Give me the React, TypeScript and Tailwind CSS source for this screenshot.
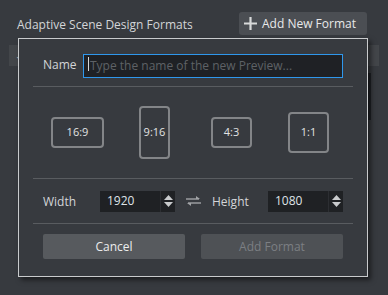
import { useState } from "react";

type Ratio = { label: string; w: string; h: string };

const ratios: Ratio[] = [
  { label: "16:9", w: "w-[53px]", h: "h-[31px]" },
  { label: "9:16", w: "w-[31px]", h: "h-[53px]" },
  { label: "4:3", w: "w-[41px]", h: "h-[31px]" },
  { label: "1:1", w: "w-[41px]", h: "h-[41px]" },
];

function Spinner() {
  return (
    <div className="flex h-full w-[15px] flex-col items-center justify-center gap-[2px] border-l border-[#2c2e32]">
      <svg width="9" height="5" viewBox="0 0 9 5">
        <path d="M4.5 0 L9 5 L0 5 Z" fill="#c9cbcd" />
      </svg>
      <svg width="9" height="5" viewBox="0 0 9 5">
        <path d="M0 0 L9 0 L4.5 5 Z" fill="#c9cbcd" />
      </svg>
    </div>
  );
}

function NumberBox({ value }: { value: string }) {
  return (
    <div className="flex h-[21px] w-[75px] items-center bg-[#1f2124]">
      <span className="flex-1 pl-[7px] text-[12px] leading-none text-[#dfe3e8]">{value}</span>
      <Spinner />
    </div>
  );
}

export default function App() {
  const [name, setName] = useState("");

  return (
    <div className="relative h-[295px] w-[388px] overflow-hidden bg-[#373a3f] font-['Open_Sans',sans-serif]">
      {/* page header */}
      <div className="flex items-center justify-between pl-[17px] pr-[21px] pt-[12px]">
        <h1 className="pt-[2px] text-[12px] text-[#d3d5d8]">Adaptive Scene Design Formats</h1>
        <button
          type="button"
          className="flex h-[23px] w-[128px] items-center gap-[5px] rounded-[3px] bg-[#4b4e53] pl-[5px] text-[12px] text-[#e8e9ea]"
        >
          <svg width="13" height="13" viewBox="0 0 13 13">
            <path d="M6.5 0 V13 M0 6.5 H13" stroke="#d8d9da" strokeWidth="2.2" />
          </svg>
          Add New Format
        </button>
      </div>

      {/* list behind the dialog */}
      <div className="mx-[9px] mt-[10px] flex h-[21px] items-center bg-[#43464a] pl-[6px]">
        <span className="text-[9px] text-[#b9bbbd]">⌄</span>
      </div>
      <div className="ml-[368px] mt-[7px] h-[47px] w-[3px] bg-[#202226]" />

      {/* dialog */}
      <div className="absolute left-[18px] top-[38px] flex w-[350px] flex-col border border-[#c9cbcd] bg-[#373a3f] shadow-[3px_3px_5px_rgba(0,0,0,0.5)]">
        <div className="flex items-center px-[24px] pt-[13px] pb-[10px]">
          <label className="w-[40px] pt-[2px] text-[12px] text-[#d3d5d8]">Name</label>
          <div className="relative h-[24px] flex-1">
            <input
              value={name}
              onChange={(e) => setName(e.target.value)}
              placeholder="Type the name of the new Preview..."
              className="h-full w-full border border-[#2f97ec] bg-[#1f2125] pl-[6px] text-[12px] text-[#dcdcdc] outline-none placeholder:text-[#5e6166]"
            />
            {name === "" && <span className="absolute left-[5px] top-[5px] h-[14px] w-px bg-[#d8d8d8]" />}
          </div>
        </div>

        <div className="mx-[14px] h-px bg-[#595c60]" />

        <div className="grid h-[91px] grid-cols-4 items-center px-[20px]">
          {ratios.map((r) => (
            <div key={r.label} className="flex justify-center">
              <button
                type="button"
                className={`${r.w} ${r.h} flex items-center justify-center rounded-[4px] border-2 border-[#838588] text-[11px] text-[#e2e3e4]`}
              >
                {r.label}
              </button>
            </div>
          ))}
        </div>

        <div className="mx-[14px] h-px bg-[#595c60]" />

        <div className="flex h-[44px] items-center px-[24px]">
          <span className="w-[57px] pt-[1px] text-[12px] text-[#d3d5d8]">Width</span>
          <NumberBox value="1920" />
          <div className="flex w-[37px] justify-center">
            <svg width="15" height="10" viewBox="0 0 15 10">
              <path d="M0 3 H13" stroke="#a2a4a7" strokeWidth="1.4" />
              <path d="M10 0 L14 3 L10 3 Z" fill="#a2a4a7" />
              <path d="M2 7 H15" stroke="#a2a4a7" strokeWidth="1.4" />
              <path d="M5 10 L1 7 L5 7 Z" fill="#a2a4a7" />
            </svg>
          </div>
          <span className="w-[56px] pt-[1px] text-[12px] text-[#d3d5d8]">Height</span>
          <NumberBox value="1080" />
        </div>

        <div className="mx-[14px] h-px bg-[#595c60]" />

        <div className="flex gap-[16px] px-[24px] pt-[10px] pb-[17px]">
          <button type="button" className="h-[25px] flex-1 rounded-[2px] bg-[#575a5e] text-[12px] text-[#eceded]">
            Cancel
          </button>
          <button type="button" disabled className="h-[25px] flex-1 rounded-[2px] bg-[#4e5155] text-[12px] text-[#7c7f83]">
            Add Format
          </button>
        </div>
      </div>
    </div>
  );
}
